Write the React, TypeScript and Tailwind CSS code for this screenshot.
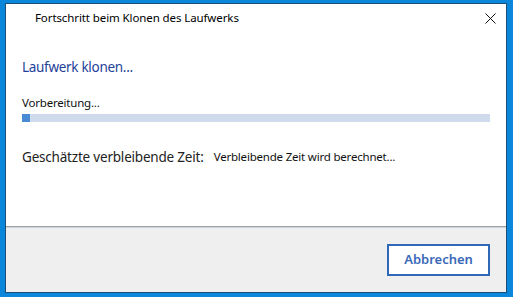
export default function App() {
    return (
        <div className="w-[513px] h-[297px] bg-[#0a86da] pt-[3px] pl-[5px] font-['Noto_Sans',sans-serif]">
            <div className="w-[502px] h-[290px] border border-[#1c4f78] bg-white flex flex-col">
                <div className="h-[28px] flex items-center justify-between pl-[29px] pr-[10px] shrink-0">
                    <span className="text-[11.5px] tracking-[-0.1px] text-black leading-none">Fortschritt beim Klonen des Laufwerks</span>
                    <svg width="11" height="11" viewBox="0 0 11 11">
                        <path d="M0.5 0.5 L10.5 10.5 M10.5 0.5 L0.5 10.5" stroke="#111" strokeWidth="1" />
                    </svg>
                </div>

                <div className="flex-1 px-[16px]">
                    <div className="mt-[25px] h-[20px] flex items-center text-[13.5px] tracking-[-0.3px] text-[#1f3f99]">Laufwerk klonen...</div>
                    <div className="mt-[18px] h-[16px] flex items-center text-[11.5px] tracking-[-0.2px] text-[#111]">Vorbereitung...</div>
                    <div className="mt-[3px] h-[8px] w-[468px] bg-[#cfdaec] flex">
                        <div className="w-[8px] h-full bg-[#4a8bd6]"></div>
                    </div>
                    <div className="mt-[25px] h-[20px] flex items-center">
                        <span className="text-[13.5px] tracking-[-0.2px] text-[#222]">Geschätzte verbleibende Zeit:</span>
                        <span className="ml-[10px] text-[11.5px] tracking-[-0.2px] text-[#111]">Verbleibende Zeit wird berechnet...</span>
                    </div>
                </div>

                <div className="h-[66px] shrink-0 border-t border-[#a0a0a0] flex flex-col">
                    <div className="h-[1px] bg-[#ccd4dc]"></div>
                    <div className="flex-1 bg-[#efefef] flex justify-end items-start pt-[16px] pr-[16px]">
                        <button className="w-[103px] h-[32px] border-2 border-[#2f68b6] bg-white text-[13px] font-semibold text-[#3a68b8]">
                            Abbrechen
                        </button>
                    </div>
                </div>
            </div>
        </div>
    )
}
